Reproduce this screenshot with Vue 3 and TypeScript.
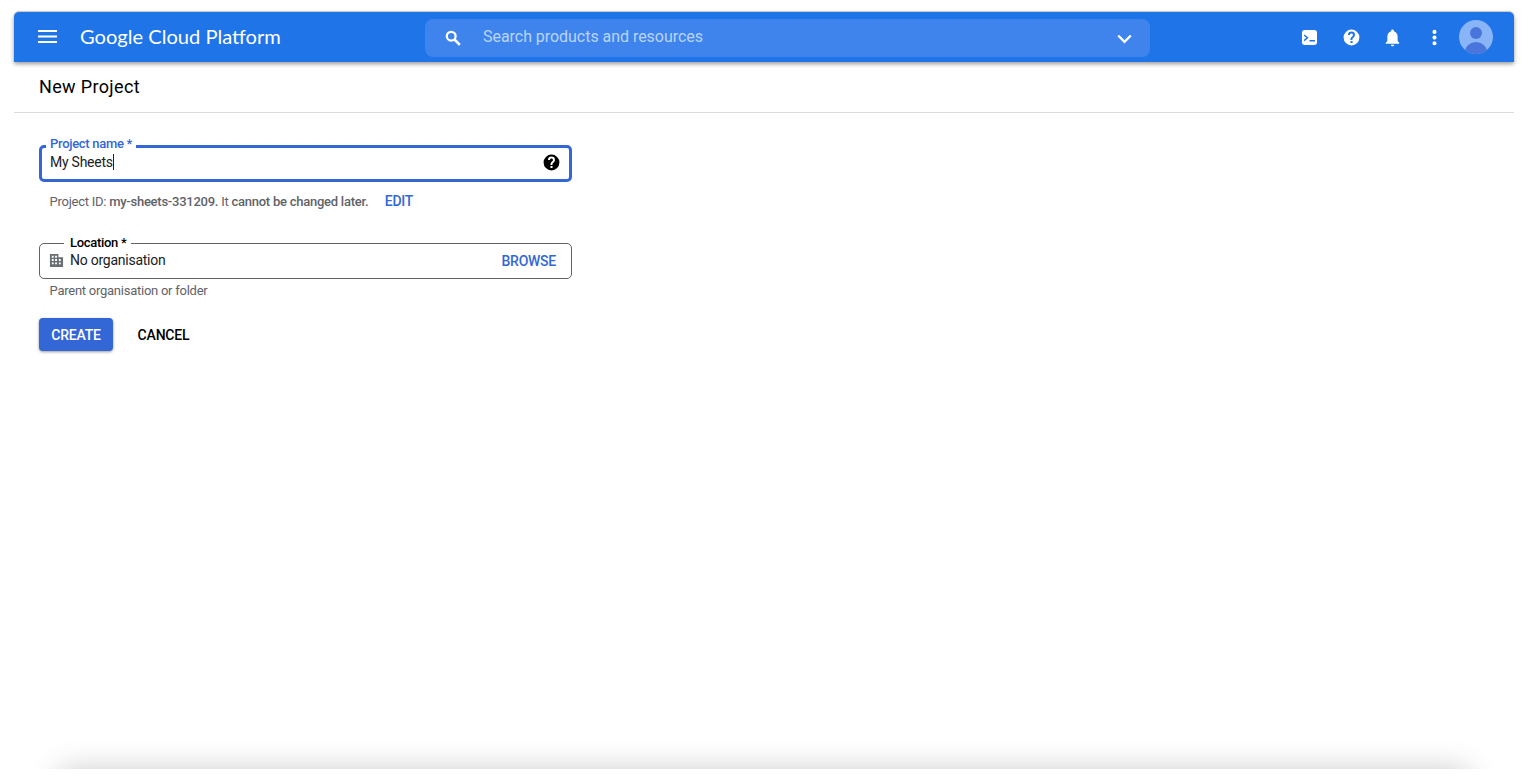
<script setup lang="ts">
const headerActions = [
  { name: 'terminal', path: 'M6 2.5h12A3.5 3.5 0 0 1 21.5 6v12a3.5 3.5 0 0 1-3.5 3.5H6A3.5 3.5 0 0 1 2.500 18V6A3.500 3.500 0 0 1 6 2.500zM5.800 8.200 4.600 9.600l3.400 2.800-3.400 2.800 1.200 1.400 5-4.200-5-4.200zM12 15v2h7v-2h-7z' },
  { name: 'help', path: 'M12 2a10 10 0 1 0 0 20 10 10 0 0 0 0-20zm1.300 17h-2.600v-2.500h2.600V19zm1.900-7.600-.9.900c-.9.900-1.100 1.500-1.100 2.700h-2.500v-.6c0-1.200.5-2.200 1.300-3l1.300-1.300c.4-.4.600-.9.600-1.400 0-1-.9-1.900-1.900-1.900s-1.900.9-1.900 1.900H7.600a4.400 4.400 0 0 1 8.800 0c0 1-.5 2-1.200 2.700z' },
  { name: 'bell', path: 'M12 23c1.300 0 2.200-.9 2.200-2H9.800c0 1.100.9 2 2.200 2zm6.500-6.500V11c0-3.300-1.800-6.100-4.800-6.800V3.500a1.700 1.700 0 0 0-3.400 0v.7C7.300 4.900 5.500 7.700 5.500 11v5.500L3.500 18.500V20h17v-1.500l-2-2z' },
  { name: 'more', path: 'M12 7.500a2.600 2.600 0 1 0 0-5.200 2.600 2.600 0 0 0 0 5.200zm0 2a2.600 2.600 0 1 0 0 5.200 2.600 2.600 0 0 0 0-5.200zm0 7.100a2.600 2.600 0 1 0 0 5.200 2.600 2.600 0 0 0 0-5.200z' },
]
</script>

<template>
  <div class="window">
    <header class="topbar">
      <svg class="menu" viewBox="0 0 19 13" width="19" height="13" aria-label="Menu">
        <path d="M0 1h19M0 6.500h19M0 12h19" stroke="#fff" stroke-width="2" fill="none" />
      </svg>
      <div class="brand">Google Cloud Platform</div>
      <div class="search">
        <svg class="search-icon" viewBox="0 0 16 16" width="16" height="16">
          <circle cx="6.200" cy="6.200" r="4.400" fill="none" stroke="#fff" stroke-width="2.300" />
          <path d="m9.500 9.500 5.300 5.300" stroke="#fff" stroke-width="2.600" fill="none" />
        </svg>
        <span class="search-text">Search products and resources</span>
        <svg class="chevron" viewBox="0 0 15 10" width="15" height="10">
          <path d="M1.200 1.500 7.500 7.800l6.300-6.300" fill="none" stroke="#fff" stroke-width="2.400" />
        </svg>
      </div>
      <div class="actions">
        <span v-for="a in headerActions" :key="a.name" class="action">
          <svg viewBox="0 0 24 24" width="19" height="19"><path fill="#fff" fill-rule="evenodd" :d="a.path" /></svg>
        </span>
        <svg class="avatar" viewBox="0 0 34 34" width="34" height="34">
          <defs><clipPath id="avatar-clip"><circle cx="17" cy="17" r="17" /></clipPath></defs>
          <circle cx="17" cy="17" r="17" fill="#8ab4f8" />
          <g clip-path="url(#avatar-clip)" fill="#4a76dc">
            <circle cx="17" cy="13" r="6" />
            <ellipse cx="17" cy="32" rx="11" ry="10" />
          </g>
        </svg>
      </div>
    </header>

    <div class="subheader">New Project</div>

    <form class="form" @submit.prevent>
      <div class="field focused">
        <span class="field-label">Project name *</span>
        <span class="value">My Sheets</span><span class="caret"></span>
        <svg class="field-help" viewBox="0 0 24 24" width="19" height="19">
          <path fill="#000" fill-rule="evenodd" d="M12 2a10 10 0 1 0 0 20 10 10 0 0 0 0-20zm1.300 17h-2.600v-2.500h2.600V19zm1.900-7.600-.9.900c-.9.900-1.100 1.500-1.100 2.700h-2.500v-.6c0-1.200.5-2.200 1.300-3l1.300-1.300c.4-.4.600-.9.600-1.400 0-1-.9-1.900-1.900-1.900s-1.900.9-1.900 1.900H7.600a4.400 4.400 0 0 1 8.800 0c0 1-.5 2-1.200 2.700z" />
        </svg>
      </div>
      <div class="project-id">
        <span>Project ID: <b>my-sheets-331209.</b> It <b>cannot be changed later.</b></span>
        <a class="link edit">EDIT</a>
      </div>

      <div class="field location">
        <span class="field-label location-label">Location *</span>
        <svg class="building" viewBox="0 0 16 16" width="15" height="15">
          <path fill="#6b6f73" fill-rule="evenodd" d="M1 1h9v3.500h5V15H1V1zm2 2v2h2V3H3zm3.500 0v2h2V3h-2zM3 6.500v2h2v-2H3zm3.500 0v2h2v-2h-2zm4 0v2h2v-2h-2zM3 10v2h2v-2H3zm3.500 0v2h2v-2h-2zm4 0v2h2v-2h-2z" />
        </svg>
        <span class="value">No organisation</span>
        <a class="link browse">BROWSE</a>
      </div>
      <div class="hint">Parent organisation or folder</div>

      <div class="buttons">
        <button class="btn primary" type="submit">CREATE</button>
        <button class="btn plain" type="button">CANCEL</button>
      </div>
    </form>

    <div class="bottom-fade"><div class="bottom-edge"></div></div>
  </div>
</template>

<style>
html, body { margin: 0; background: #fff; }
</style>

<style scoped>
.window {
  position: relative;
  box-sizing: border-box;
  width: 1500px;
  height: 757px;
  margin: 12px 16px 0 14px;
  font-family: Roboto, "Liberation Sans", sans-serif;
  color: #000;
}
.topbar {
  position: relative;
  display: flex;
  align-items: center;
  height: 50px;
  padding: 0 21px 0 24px;
  box-sizing: border-box;
  background: #1f74e8;
  border-radius: 5px 5px 0 0;
  box-shadow: 0 2px 4px rgba(0, 0, 0, 0.4), 0 -1px 1px rgba(0, 0, 0, 0.18);
}
.menu { flex: none; margin-top: -1px; }
.brand {
  width: 345px;
  margin-left: 23px;
  margin-top: -2px;
  font-family: Lato, "Open Sans", sans-serif;
  font-size: 20.100px;
  color: #fff;
  white-space: nowrap;
}
.search {
  display: flex;
  align-items: center;
  flex: none;
  width: 725px;
  height: 38px;
  margin-top: 1px;
  padding: 0 18px 0 20px;
  box-sizing: border-box;
  background: #3f84ec;
  border-radius: 8px;
}
.search-icon { flex: none; }
.search-text {
  flex: 1;
  margin-left: 22px;
  margin-top: -2px;
  font-size: 16px;
  letter-spacing: -0.04px;
  color: #b9d4fa;
}
.chevron { flex: none; margin-top: 2px; }
.actions {
  display: flex;
  align-items: center;
  margin-left: auto;
}
.action {
  display: flex;
  justify-content: center;
  width: 41.600px;
}
.avatar { margin-left: 4px; }
.subheader {
  display: flex;
  align-items: center;
  box-sizing: border-box;
  height: 51px;
  padding-left: 25px;
  padding-bottom: 2px;
  font-size: 18px;
  letter-spacing: 0.35px;
  border-bottom: 1px solid #dadce0;
}
.form {
  width: 533px;
  padding: 31.500px 0 0 25px;
}
.field {
  position: relative;
  display: flex;
  align-items: center;
  box-sizing: border-box;
  width: 533px;
  height: 36px;
  border-radius: 5px;
  font-size: 14px;
  letter-spacing: -0.25px;
}
.focused {
  height: 37px;
  padding: 0 8px 0 8px;
  border: 3px solid #3367d6;
}
.location {
  margin-top: 32px;
  padding: 0 15px 0 10px;
  border: 1px solid #5f6368;
}
.field-label {
  position: absolute;
  left: 4px;
  top: -11.500px;
  padding: 0 4px;
  background: #fff;
  font-size: 13px;
  font-weight: 500;
  letter-spacing: -0.3px;
  line-height: 15px;
  color: #3367d6;
}
.location-label {
  left: 24px;
  top: -9px;
  padding: 0 5px 0 6px;
  color: #000;
}
.value {
  margin-top: -2px;
  line-height: 20px;
  color: #202124;
}
.caret {
  width: 1px;
  height: 16px;
  margin-top: -2px;
  background: #202124;
}
.field-help { margin-left: auto; margin-top: -2px; }
.building { flex: none; margin-right: 6px; margin-left: -1px; margin-top: -1px; }
.project-id {
  display: flex;
  align-items: center;
  height: 20px;
  margin-top: 9.500px;
  padding-left: 10.500px;
  font-size: 13px;
  letter-spacing: -0.25px;
  color: #5f6368;
  white-space: nowrap;
}
.project-id b { font-weight: 500; }
.link {
  color: #3367d6;
  font-size: 14px;
  font-weight: 500;
  letter-spacing: -0.25px;
}
.edit { margin-left: 16.500px; }
.browse { margin-left: auto; margin-top: -1px; }
.hint {
  height: 15px;
  margin-top: 4px;
  padding-left: 10.500px;
  font-size: 13px;
  letter-spacing: -0.25px;
  line-height: 15px;
  color: #5f6368;
}
.buttons {
  display: flex;
  gap: 13px;
  margin-top: 20px;
}
.btn {
  width: 74px;
  height: 33px;
  padding: 0 0 0;
  border: none;
  border-radius: 4px;
  background: none;
  font: 500 14px Roboto, sans-serif;
  letter-spacing: -0.2px;
  color: #000;
}
.plain { width: 75px; margin-left: 0; }
.primary {
  background: #3367d6;
  color: #fff;
  box-shadow: 0 1px 3px rgba(0, 0, 0, 0.4);
}
.bottom-fade {
  position: absolute;
  left: 0;
  right: 0;
  bottom: 0;
  height: 45px;
  overflow: hidden;
}
.bottom-edge {
  position: absolute;
  left: 45px;
  right: 45px;
  top: 45px;
  height: 40px;
  box-shadow: 0 0 30px rgba(0, 0, 0, 0.2);
}
</style>
